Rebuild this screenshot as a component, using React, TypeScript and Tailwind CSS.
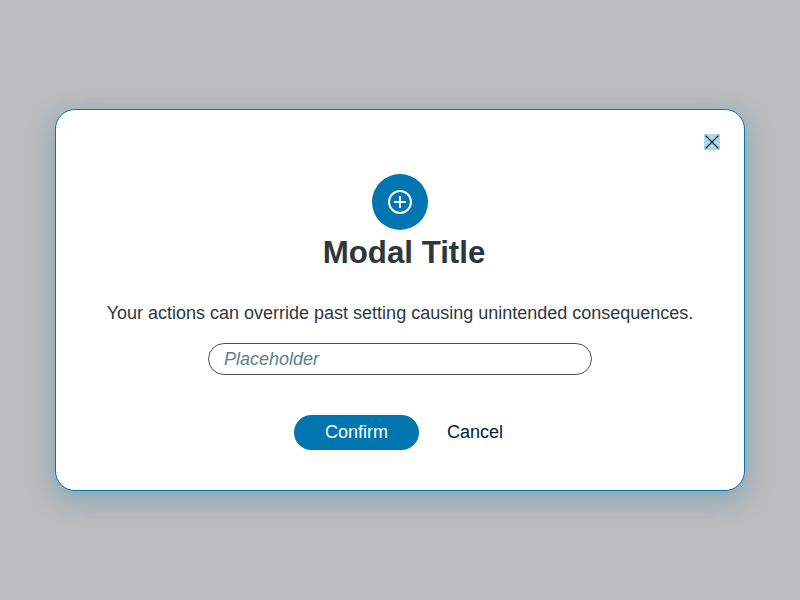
export default function App() {
  return (
    <div className="flex h-screen w-screen items-center justify-center overflow-hidden bg-[#bbbcbd] font-['Liberation_Sans',Arial,sans-serif] text-[#2d373c] antialiased">
      <div role="dialog" className="flex h-[382px] w-[690px] flex-col items-center rounded-[20px] border border-[#0076b1] bg-white shadow-[0_8px_28px_rgba(0,118,177,0.33)]">
        <div className="flex h-16 w-full justify-end pt-6 pr-6">
          <button aria-label="Close" className="flex size-4 items-center justify-center bg-[#b2d6e8]">
            <svg viewBox="0 0 16 16" className="size-4" fill="none" stroke="#002136" strokeWidth="1.2" strokeLinecap="round">
              <path d="M2 2l12 12M14 2L2 14" />
            </svg>
          </button>
        </div>
        <div className="flex size-14 shrink-0 items-center justify-center rounded-full bg-[#0076b1]">
          <svg viewBox="0 0 24 24" className="size-6" fill="none" stroke="white" strokeWidth="2">
            <circle cx="12" cy="12" r="11" />
            <path d="M12 6v12M6 12h12" />
          </svg>
        </div>
        <h1 className="mt-[5px] ml-2 text-[31.25px] leading-9 font-bold">Modal Title</h1>
        <p className="mt-[30px] text-lg leading-6">Your actions can override past setting causing unintended consequences.</p>
        <input placeholder="Placeholder" className="mt-[18px] h-8 w-96 rounded-2xl border border-[#445459] px-[15px] text-lg outline-none placeholder:text-[#5b7f8f] placeholder:italic" />
        <div className="mt-10 flex w-full pl-[238px] text-lg">
          <button className="h-[35px] w-[125px] rounded-full bg-[#0076b1] pb-[2px] text-white">Confirm</button>
          <button className="ml-7 h-[35px] pb-[2px] text-[#002136]">Cancel</button>
        </div>
      </div>
    </div>
  );
}
